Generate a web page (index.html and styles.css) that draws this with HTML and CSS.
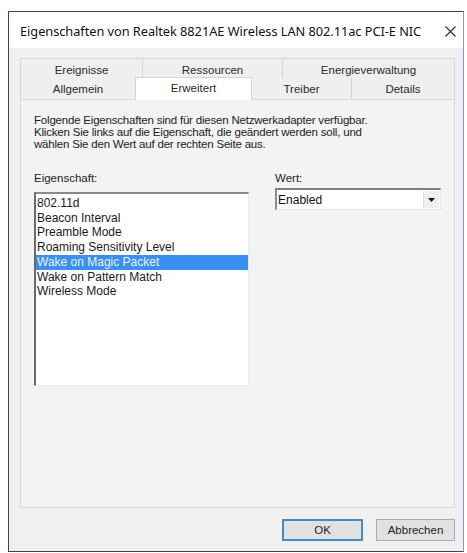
FILE: index.html
```html
<!DOCTYPE html>
<html lang="de">
<head>
<meta charset="utf-8">
<title>Eigenschaften</title>
<link rel="stylesheet" href="styles.css">
</head>
<body>
<div class="window">
  <div class="titlebar">
    <span class="title">Eigenschaften von Realtek 8821AE Wireless LAN 802.11ac PCI-E NIC</span>
    <svg class="close" width="11" height="11" viewBox="0 0 11 11"><path d="M0.5 0.5 L10.5 10.5 M10.5 0.5 L0.5 10.5" stroke="#2b2b2b" stroke-width="1.1" fill="none"/></svg>
  </div>
  <div class="tabs">
    <div class="tabrow back">
      <div class="tab t-ereig">Ereignisse</div>
      <div class="tab t-ress">Ressourcen</div>
      <div class="tab t-energ">Energieverwaltung</div>
    </div>
    <div class="tabrow front">
      <div class="tab t-allg">Allgemein</div>
      <div class="tab t-erw selected">Erweitert</div>
      <div class="tab t-treib">Treiber</div>
      <div class="tab t-det">Details</div>
    </div>
    <div class="panel">
      <p class="intro">Folgende Eigenschaften sind für diesen Netzwerkadapter verfügbar.<br>Klicken Sie links auf die Eigenschaft, die geändert werden soll, und<br>wählen Sie den Wert auf der rechten Seite aus.</p>
      <div class="fields">
        <div class="col-left">
          <div class="label">Eigenschaft:</div>
          <ul class="listbox">
            <li>802.11d</li>
            <li>Beacon Interval</li>
            <li>Preamble Mode</li>
            <li>Roaming Sensitivity Level</li>
            <li class="sel">Wake on Magic Packet</li>
            <li>Wake on Pattern Match</li>
            <li>Wireless Mode</li>
          </ul>
        </div>
        <div class="col-right">
          <div class="label">Wert:</div>
          <div class="combo">
            <span class="combo-text">Enabled</span>
            <span class="combo-btn"><svg width="7" height="4" viewBox="0 0 7 4"><path d="M0 0 H7 L3.5 4 Z" fill="#111"/></svg></span>
          </div>
        </div>
      </div>
    </div>
  </div>
  <div class="buttons">
    <button class="btn default">OK</button>
    <button class="btn">Abbrechen</button>
  </div>
</div>
</body>
</html>
```

FILE: styles.css
```css
html, body {
  margin: 0;
  padding: 0;
  background: #ffffff;
}
body {
  font-family: "Liberation Sans", Arial, sans-serif;
  font-size: 12px;
  color: #1e1e1e;
}
.window {
  box-sizing: border-box;
  margin: 11px 0 0 8px;
  width: 456px;
  height: 541px;
  border: 1px solid #34435f;
  border-right-color: #7d9cc4;
  background: #f0f0f0;
  display: flex;
  flex-direction: column;
}
.titlebar {
  height: 36px;
  background: #ffffff;
  display: flex;
  align-items: center;
  justify-content: space-between;
  padding: 2px 6px 0 11px;
  box-sizing: border-box;
}
.title {
  font-family: "Noto Sans", "Open Sans", sans-serif;
  font-size: 12.8px;
  color: #111;
  letter-spacing: -0.05px;
}
.close {
  margin-right: 1px;
}
.tabs {
  margin: 10px 0 0 11px;
  width: 435px;
}
.tabrow {
  display: flex;
}
.tabrow.back {
  height: 20px;
}
.tabrow.front {
  height: 21px;
}
.tab {
  box-sizing: border-box;
  display: flex;
  align-items: center;
  justify-content: center;
  border: 1px solid #d6d6d6;
  border-bottom: none;
  background: #efefef;
  color: #2a2a2a;
  font-size: 11.5px;
}
.back .tab { padding-top: 2px; }
.front .tab { border-top: none; }
.t-ereig { width: 123px; }
.t-ress { width: 140px; border-left: none; }
.t-energ { width: 172px; border-left: none; }
.t-allg { width: 115px; }
.t-erw { width: 117px; }
.t-treib { width: 100px; border-left: none; }
.t-det { width: 103px; border-left: none; }
.tab.selected {
  background: #ffffff;
  border: 1px solid #d6d6d6;
  border-bottom: none;
  margin-top: -1px;
  height: 23px;
  position: relative;
  z-index: 1;
  padding-bottom: 3px;
}
.t-allg { border-right: none; }
.panel {
  box-sizing: border-box;
  height: 409px;
  border: 1px solid #d9d9d9;
  background: #f3f3f3;
  padding: 14px 13px 0 13px;
}
.intro {
  margin: 0;
  font-size: 11.5px;
  line-height: 12px;
  color: #222;
  letter-spacing: -0.2px;
}
.fields {
  display: flex;
  margin-top: 21px;
  gap: 26px;
}
.col-left { width: 219px; }
.col-right { width: 169px; }
.label {
  line-height: 14px;
  font-size: 11.5px;
  color: #222;
}
.listbox {
  list-style: none;
  margin: 7px 0 0 0;
  padding: 2px 0 0 0;
  height: 194px;
  box-sizing: border-box;
  background: #fff;
  border-style: solid;
  border-width: 2px 1px 1px 2px;
  border-color: #8a8a8a #ececec #ececec #6a6a6a;
}
.listbox li {
  line-height: 14.7px;
  padding-left: 1px;
  white-space: nowrap;
  color: #1a1a1a;
}
.listbox li.sel {
  background: #3a8ff0;
  color: #e8f2ff;
}
.combo {
  margin-top: 3px;
  height: 22px;
  box-sizing: border-box;
  background: #fff;
  border-style: solid;
  border-width: 2px 1px 1px 2px;
  border-color: #7e7e7e #e6e6e6 #e6e6e6 #8c8c8c;
  display: flex;
  align-items: center;
  justify-content: space-between;
}
.combo-text {
  padding-left: 1px;
  color: #111;
}
.combo-btn {
  width: 15px;
  height: 17px;
  margin-right: 1px;
  background: #f0f0f0;
  border-left: 1px solid #e3e3e3;
  display: flex;
  align-items: center;
  justify-content: center;
}
.buttons {
  display: flex;
  justify-content: flex-end;
  gap: 13px;
  margin: 11px 8px 0 0;
}
.btn {
  box-sizing: border-box;
  height: 22px;
  font-family: "Liberation Sans", Arial, sans-serif;
  font-size: 11.5px;
  color: #222;
  background: #e1e1e1;
  border: 1px solid #adadad;
  padding: 0;
  width: 79px;
}
.btn.default {
  width: 81px;
  border: 2px solid #4a8ac0;
}
```
